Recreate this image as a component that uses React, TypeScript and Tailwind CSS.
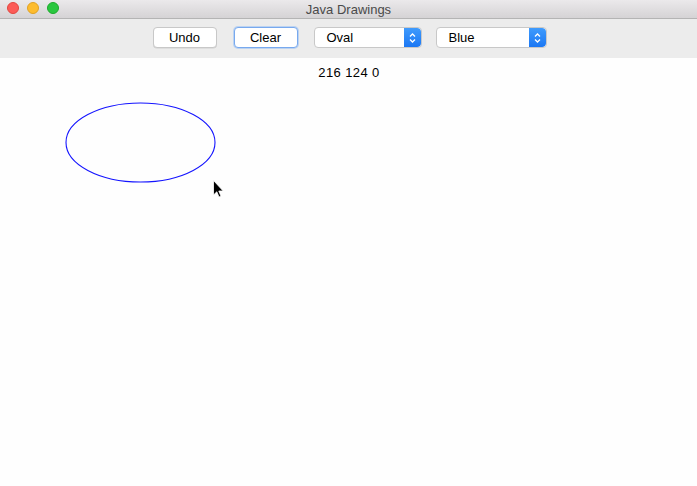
import React from "react";

function Stepper() {
  return (
    <div className="w-[17px] self-stretch rounded-r-[4px] bg-gradient-to-b from-[#3f9bfd] to-[#1b77f3] flex items-center justify-center">
      <svg width="9" height="14" viewBox="0 0 9 14">
        <path d="M2 5.5 L4.5 3 L7 5.5" fill="none" stroke="white" strokeWidth="1.3" />
        <path d="M2 8.5 L4.5 11 L7 8.5" fill="none" stroke="white" strokeWidth="1.3" />
      </svg>
    </div>
  );
}

export default function App() {
  return (
    <div
      className="w-[697px] h-[486px] flex flex-col bg-white overflow-hidden"
      style={{ fontFamily: '"Liberation Sans", Arial, sans-serif' }}
    >
      <div className="relative h-[19px] shrink-0 bg-gradient-to-b from-[#ebe9eb] to-[#d5d3d5] border-b border-[#b4b4b4] flex items-center justify-center">
        <div className="absolute left-[7px] top-[2px] flex gap-[8px]">
          <div className="w-[12px] h-[12px] rounded-full bg-[#fc5b57] border border-[#e2463f]" />
          <div className="w-[12px] h-[12px] rounded-full bg-[#fdbc2e] border border-[#e0a223]" />
          <div className="w-[12px] h-[12px] rounded-full bg-[#2ac73f] border border-[#1daa2c]" />
        </div>
        <span className="text-[13px] text-[#4a4a4a] leading-none">Java Drawings</span>
      </div>
      <div className="h-[39px] shrink-0 bg-[#ececec] flex items-start justify-center pt-[8px] pl-[2px]">
        <div className="w-[64px] h-[21px] bg-white rounded-[4px] border border-[#c8c8c8] shadow-[0_0.5px_0.5px_rgba(0,0,0,0.12)] flex items-center justify-center text-[13px] text-black">
          Undo
        </div>
        <div className="ml-[17px] w-[64px] h-[21px] bg-white rounded-[4px] border border-[#78a9ee] shadow-[0_0_0_1px_rgba(140,185,245,0.5)] flex items-center justify-center text-[13px] text-black">
          Clear
        </div>
        <div className="ml-[16px] w-[108px] h-[21px] bg-white rounded-[4px] border border-[#c8c8c8] flex items-stretch text-[13px] text-black overflow-hidden">
          <div className="flex-1 flex items-center pl-[12px]">Oval</div>
          <Stepper />
        </div>
        <div className="ml-[14px] w-[111px] h-[21px] bg-white rounded-[4px] border border-[#c8c8c8] flex items-stretch text-[13px] text-black overflow-hidden">
          <div className="flex-1 flex items-center pl-[12px]">Blue</div>
          <Stepper />
        </div>
      </div>
      <div className="relative flex-1 bg-[#fefefe]">
        <div className="flex justify-center pt-[7px] pl-[1px] text-[13px] tracking-[0.4px] text-black leading-[15px]">216 124 0</div>
        <svg className="absolute left-0 top-0" width="697" height="428" viewBox="0 58 697 428">
          <ellipse cx="140.5" cy="142.5" rx="74.5" ry="39.5" fill="none" stroke="#1414ff" strokeWidth="1.1" />
          <path
            d="M213.5 180.5 L213.5 195 L216.8 191.8 L219 197 L221 196.2 L218.8 191 L223.2 191 Z"
            fill="black"
            stroke="white"
            strokeWidth="0.8"
          />
        </svg>
      </div>
    </div>
  );
}
